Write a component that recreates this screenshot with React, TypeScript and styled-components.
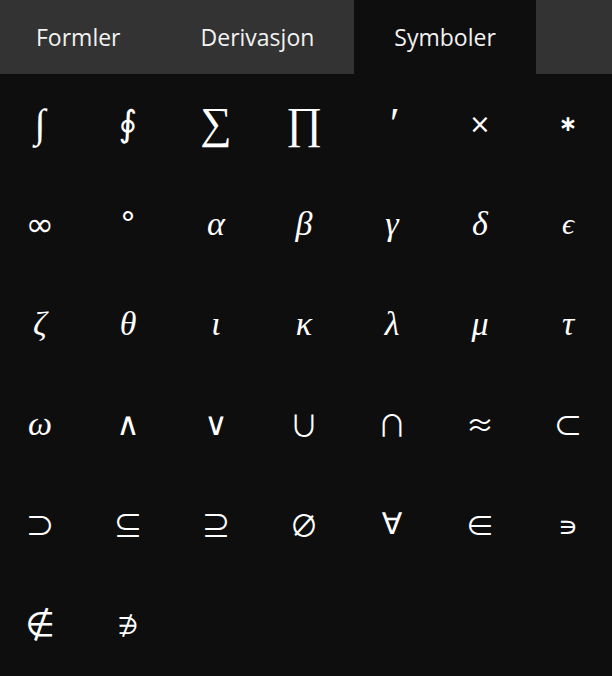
import React from 'react';
import styled, { createGlobalStyle, css } from 'styled-components';

const GlobalStyle = createGlobalStyle`
  html, body {
    margin: 0;
    padding: 0;
    background: #0e0e0e;
    overflow: hidden;
  }
`;

const Page = styled.div`
  width: 616px;
  margin-left: -4px;
  background: #0e0e0e;
`;

const TabBar = styled.nav`
  display: flex;
  height: 74px;
  background: #333333;
`;

const Tab = styled.button<{ $active?: boolean }>`
  display: flex;
  align-items: center;
  height: 100%;
  padding: 0 40px;
  border: none;
  margin: 0;
  font-family: 'Open Sans', 'Noto Sans', sans-serif;
  font-size: 23px;
  font-weight: 400;
  color: #f2f2f2;
  background: ${(p) => (p.$active ? '#0e0e0e' : 'transparent')};
  cursor: pointer;
`;

const SymbolGrid = styled.div`
  display: grid;
  grid-template-columns: repeat(7, 88px);
  grid-auto-rows: 100px;
`;

type Face = 'serif' | 'italic' | 'sans' | 'cjk';

const faces = {
  serif: css`
    font-family: 'Liberation Serif', 'DejaVu Serif', serif;
    font-style: normal;
    font-weight: 400;
  `,
  italic: css`
    font-family: 'Liberation Serif', 'DejaVu Serif', serif;
    font-style: italic;
    font-weight: 400;
  `,
  sans: css`
    font-family: 'DejaVu Sans', 'Noto Sans', sans-serif;
    font-style: normal;
    font-weight: 400;
  `,
  cjk: css`
    font-family: 'Noto Sans CJK JP', 'DejaVu Sans', sans-serif;
    font-style: normal;
    font-weight: 400;
  `,
};

const SymbolCell = styled.button<{ $face: Face; $size: number; $bold?: boolean }>`
  display: flex;
  align-items: center;
  justify-content: center;
  padding: 0;
  border: none;
  background: transparent;
  color: #ffffff;
  line-height: 1;
  cursor: pointer;
  ${(p) => faces[p.$face]}
  font-size: ${(p) => p.$size}px;
  ${(p) => p.$bold && 'font-weight: 700;'}
`;

interface MathSymbol {
  char: string;
  face: Face;
  size: number;
  bold?: boolean;
}

const symbols: MathSymbol[] = [
  { char: '∫', face: 'serif', size: 40 },
  { char: '∮', face: 'sans', size: 36 },
  { char: '∑', face: 'serif', size: 44 },
  { char: '∏', face: 'serif', size: 44 },
  { char: '′', face: 'italic', size: 44 },
  { char: '×', face: 'sans', size: 26 },
  { char: '∗', face: 'sans', size: 22, bold: true },

  { char: '∞', face: 'sans', size: 34 },
  { char: '°', face: 'sans', size: 32 },
  { char: 'α', face: 'italic', size: 34 },
  { char: 'β', face: 'italic', size: 34 },
  { char: 'γ', face: 'italic', size: 34 },
  { char: 'δ', face: 'italic', size: 34 },
  { char: 'ϵ', face: 'italic', size: 30 },

  { char: 'ζ', face: 'italic', size: 34 },
  { char: 'θ', face: 'italic', size: 34 },
  { char: 'ι', face: 'italic', size: 34 },
  { char: 'κ', face: 'italic', size: 34 },
  { char: 'λ', face: 'italic', size: 34 },
  { char: 'μ', face: 'italic', size: 34 },
  { char: 'τ', face: 'italic', size: 34 },

  { char: 'ω', face: 'italic', size: 34 },
  { char: '∧', face: 'sans', size: 32 },
  { char: '∨', face: 'sans', size: 32 },
  { char: '∪', face: 'cjk', size: 29 },
  { char: '∩', face: 'cjk', size: 29 },
  { char: '≈', face: 'cjk', size: 28 },
  { char: '⊂', face: 'cjk', size: 29 },

  { char: '⊃', face: 'cjk', size: 29 },
  { char: '⊆', face: 'cjk', size: 29 },
  { char: '⊇', face: 'cjk', size: 29 },
  { char: '∅', face: 'cjk', size: 29 },
  { char: '∀', face: 'sans', size: 30 },
  { char: '∈', face: 'cjk', size: 29 },
  { char: '∍', face: 'cjk', size: 28 },

  { char: '∉', face: 'sans', size: 34 },
  { char: '∌', face: 'cjk', size: 24 },
];

const tabs = ['Formler', 'Derivasjon', 'Symboler'];

const App = (): JSX.Element => {
  const [activeTab, setActiveTab] = React.useState<string>('Symboler');

  return (
    <Page>
      <GlobalStyle />
      <TabBar>
        {tabs.map((t) => (
          <Tab key={t} $active={t === activeTab} onClick={() => setActiveTab(t)}>
            {t}
          </Tab>
        ))}
      </TabBar>
      <SymbolGrid>
        {symbols.map((s) => (
          <SymbolCell key={s.char} $face={s.face} $size={s.size} $bold={s.bold}>
            {s.char}
          </SymbolCell>
        ))}
      </SymbolGrid>
    </Page>
  );
};

export default App;
